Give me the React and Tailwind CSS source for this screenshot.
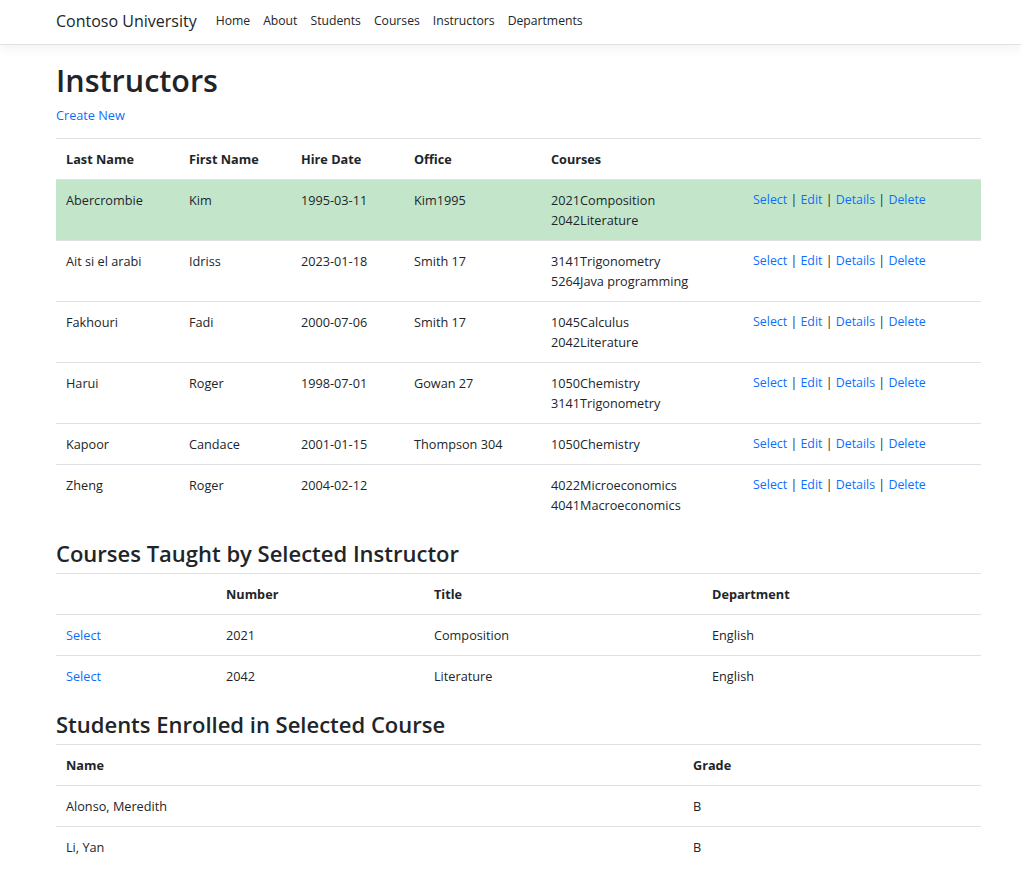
import React from "react";

const instructors = [
  { last: "Abercrombie", first: "Kim", hire: "1995-03-11", office: "Kim1995", courses: ["2021Composition", "2042Literature"], selected: true },
  { last: "Ait si el arabi", first: "Idriss", hire: "2023-01-18", office: "Smith 17", courses: ["3141Trigonometry", "5264Java programming"] },
  { last: "Fakhouri", first: "Fadi", hire: "2000-07-06", office: "Smith 17", courses: ["1045Calculus", "2042Literature"] },
  { last: "Harui", first: "Roger", hire: "1998-07-01", office: "Gowan 27", courses: ["1050Chemistry", "3141Trigonometry"] },
  { last: "Kapoor", first: "Candace", hire: "2001-01-15", office: "Thompson 304", courses: ["1050Chemistry"] },
  { last: "Zheng", first: "Roger", hire: "2004-02-12", office: "", courses: ["4022Microeconomics", "4041Macroeconomics"] },
];

const courses = [
  { number: "2021", title: "Composition", dept: "English" },
  { number: "2042", title: "Literature", dept: "English" },
];

const students = [
  { name: "Alonso, Meredith", grade: "B" },
  { name: "Li, Yan", grade: "B" },
];

const navLinks = ["Home", "About", "Students", "Courses", "Instructors", "Departments"];

const td = "px-[10px] py-[10px] align-top leading-[20px]";
const th = "px-[10px] py-[10px] text-left align-bottom font-bold leading-[20px]";
const link = "text-[#0d6efd]";

export default function App() {
  return (
    <div
      className="min-h-screen bg-white text-[#212529] text-[12.7px]"
      style={{ fontFamily: '"Segoe UI", "Open Sans", "Noto Sans", sans-serif' }}
    >
      <nav className="h-[45px] bg-white border-b border-[#dee2e6] shadow-[0_4px_12px_rgba(0,0,0,0.05)]">
        <div className="ml-[56px] flex h-full items-center pb-[2px]">
          <span className="text-[16px] text-[#212529] mr-[19px]">Contoso University</span>
          <div className="flex gap-[13px] text-[12.2px] text-[#212529]">
            {navLinks.map((l) => (
              <span key={l}>{l}</span>
            ))}
          </div>
        </div>
      </nav>

      <main className="ml-[56px] w-[925px] pb-[20px]">
        <h1 className="text-[30.5px] font-semibold leading-[42px] mt-[14px]">Instructors</h1>
        <div className="mt-[4px] leading-[20px]">
          <span className={link}>Create New</span>
        </div>

        <table className="w-full table-fixed border-collapse mt-[13px]">
          <colgroup>
            <col className="w-[123px]" />
            <col className="w-[112px]" />
            <col className="w-[113px]" />
            <col className="w-[137px]" />
            <col className="w-[202px]" />
            <col />
          </colgroup>
          <thead>
            <tr className="border-t border-b border-[#dee2e6]">
              <th className={th}>Last Name</th>
              <th className={th}>First Name</th>
              <th className={th}>Hire Date</th>
              <th className={th}>Office</th>
              <th className={th}>Courses</th>
              <th className={th}></th>
            </tr>
          </thead>
          <tbody>
            {instructors.map((r) => (
              <tr
                key={r.last}
                className={`border-b border-[#dee2e6] last:border-b-0 ${r.selected ? "bg-[#c3e6cb]" : ""}`}
              >
                <td className={td}>{r.last}</td>
                <td className={td}>{r.first}</td>
                <td className={td}>{r.hire}</td>
                <td className={td}>{r.office}</td>
                <td className={td}>
                  {r.courses.map((c) => (
                    <div key={c}>{c}</div>
                  ))}
                </td>
                <td className={`${td} text-[12.4px]`}>
                  <span className={link}>Select</span> | <span className={link}>Edit</span> |{" "}
                  <span className={link}>Details</span> | <span className={link}>Delete</span>
                </td>
              </tr>
            ))}
          </tbody>
        </table>

        <h3 className="text-[22px] font-semibold leading-[28px] mt-[14px] mb-[6px]">
          Courses Taught by Selected Instructor
        </h3>
        <table className="w-full table-fixed border-collapse">
          <colgroup>
            <col className="w-[160px]" />
            <col className="w-[208px]" />
            <col className="w-[278px]" />
            <col />
          </colgroup>
          <thead>
            <tr className="border-t border-b border-[#dee2e6]">
              <th className={th}></th>
              <th className={th}>Number</th>
              <th className={th}>Title</th>
              <th className={th}>Department</th>
            </tr>
          </thead>
          <tbody>
            {courses.map((c) => (
              <tr key={c.number} className="border-b border-[#dee2e6] last:border-b-0">
                <td className={td}>
                  <span className={link}>Select</span>
                </td>
                <td className={td}>{c.number}</td>
                <td className={td}>{c.title}</td>
                <td className={td}>{c.dept}</td>
              </tr>
            ))}
          </tbody>
        </table>

        <h3 className="text-[22px] font-semibold leading-[28px] mt-[14px] mb-[6px]">
          Students Enrolled in Selected Course
        </h3>
        <table className="w-full table-fixed border-collapse">
          <colgroup>
            <col className="w-[627px]" />
            <col />
          </colgroup>
          <thead>
            <tr className="border-t border-b border-[#dee2e6]">
              <th className={th}>Name</th>
              <th className={th}>Grade</th>
            </tr>
          </thead>
          <tbody>
            {students.map((s) => (
              <tr key={s.name} className="border-b border-[#dee2e6] last:border-b-0">
                <td className={td}>{s.name}</td>
                <td className={td}>{s.grade}</td>
              </tr>
            ))}
          </tbody>
        </table>
      </main>
    </div>
  );
}
